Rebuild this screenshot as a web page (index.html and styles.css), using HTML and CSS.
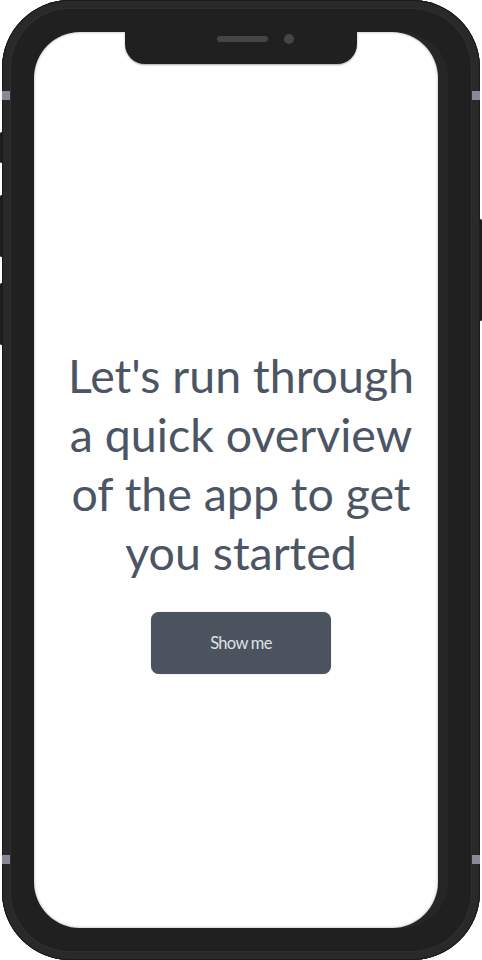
FILE: index.html
```html
<!DOCTYPE html>
<html lang="en">
<head>
<meta charset="utf-8">
<title>Onboarding</title>
<link rel="stylesheet" href="styles.css">
</head>
<body>
<div class="device">
  <span class="side-key key-l1"></span>
  <span class="side-key key-l2"></span>
  <span class="side-key key-l3"></span>
  <span class="side-key key-r1"></span>
  <span class="antenna ant-tl"></span>
  <span class="antenna ant-bl"></span>
  <span class="antenna ant-tr"></span>
  <span class="antenna ant-br"></span>
  <div class="screen">
    <div class="notch">
      <span class="speaker"></span>
      <span class="camera"></span>
    </div>
    <div class="content">
      <h1 class="headline">Let's run through a quick overview of the app to get you started</h1>
      <button class="cta" type="button">Show me</button>
    </div>
  </div>
</div>
</body>
</html>
```

FILE: styles.css
```css
html, body {
  margin: 0;
  padding: 0;
  background: #ffffff;
}

body {
  width: 482px;
  height: 960px;
  overflow: hidden;
  font-family: Lato, "Open Sans", sans-serif;
}

.device {
  position: relative;
  box-sizing: border-box;
  width: 478px;
  height: 960px;
  margin-left: 2px;
  padding: 32px 42px 32px 32px;
  border-radius: 68px;
  background: #202020;
  box-shadow:
    inset 0 0 0 1px #1a1a1a,
    inset 0 0 0 8px #292929,
    inset 0 0 0 9px #303030;
}

.side-key {
  position: absolute;
  width: 3px;
  background: #1c1c1c;
  border-radius: 2px;
}
.key-l1 { left: -2px; top: 132px; height: 31px; }
.key-l2 { left: -2px; top: 195px; height: 62px; }
.key-l3 { left: -2px; top: 283px; height: 62px; }
.key-r1 { right: -2px; top: 219px; height: 102px; }

.antenna {
  position: absolute;
  width: 8px;
  height: 9px;
  background: #878a96;
}
.ant-tl { left: 0; top: 91px; }
.ant-bl { left: 0; top: 855px; }
.ant-tr { right: 0; top: 91px; }
.ant-br { right: 0; top: 855px; }

.screen {
  position: relative;
  height: 100%;
  box-sizing: border-box;
  background: #ffffff;
  border-radius: 46px;
  box-shadow:
    inset 0 0 3px rgba(0, 0, 0, 0.35),
    10px 0 0 0 #262626;
  padding: 314px 0 0 10px;
}

.notch {
  position: absolute;
  left: 91px;
  top: 0;
  width: 232px;
  height: 32px;
  background: #202020;
  border-radius: 0 0 20px 20px;
  box-shadow: 0 1px 2px rgba(0, 0, 0, 0.35);
}

.speaker {
  position: absolute;
  left: 92px;
  top: 4px;
  width: 51px;
  height: 6px;
  border-radius: 3px;
  background: #454545;
}

.camera {
  position: absolute;
  left: 159px;
  top: 2px;
  width: 10px;
  height: 10px;
  border-radius: 50%;
  background: #454545;
}

.content {
  display: flex;
  flex-direction: column;
  align-items: center;
}

.headline {
  margin: 0;
  width: 360px;
  font-family: Lato, "Open Sans", sans-serif;
  font-weight: 400;
  font-size: 46.5px;
  line-height: 59px;
  color: #4b5563;
  text-align: center;
  letter-spacing: 0;
}

.cta {
  margin-top: 30px;
  width: 180px;
  height: 62px;
  border: 0;
  border-radius: 8px;
  background: #4a535e;
  color: #dfe2e6;
  font-family: Lato, "Open Sans", sans-serif;
  font-size: 16.5px;
  letter-spacing: -0.7px;
  box-shadow: 0 0 1px rgba(0, 0, 0, 0.4);
}
```
